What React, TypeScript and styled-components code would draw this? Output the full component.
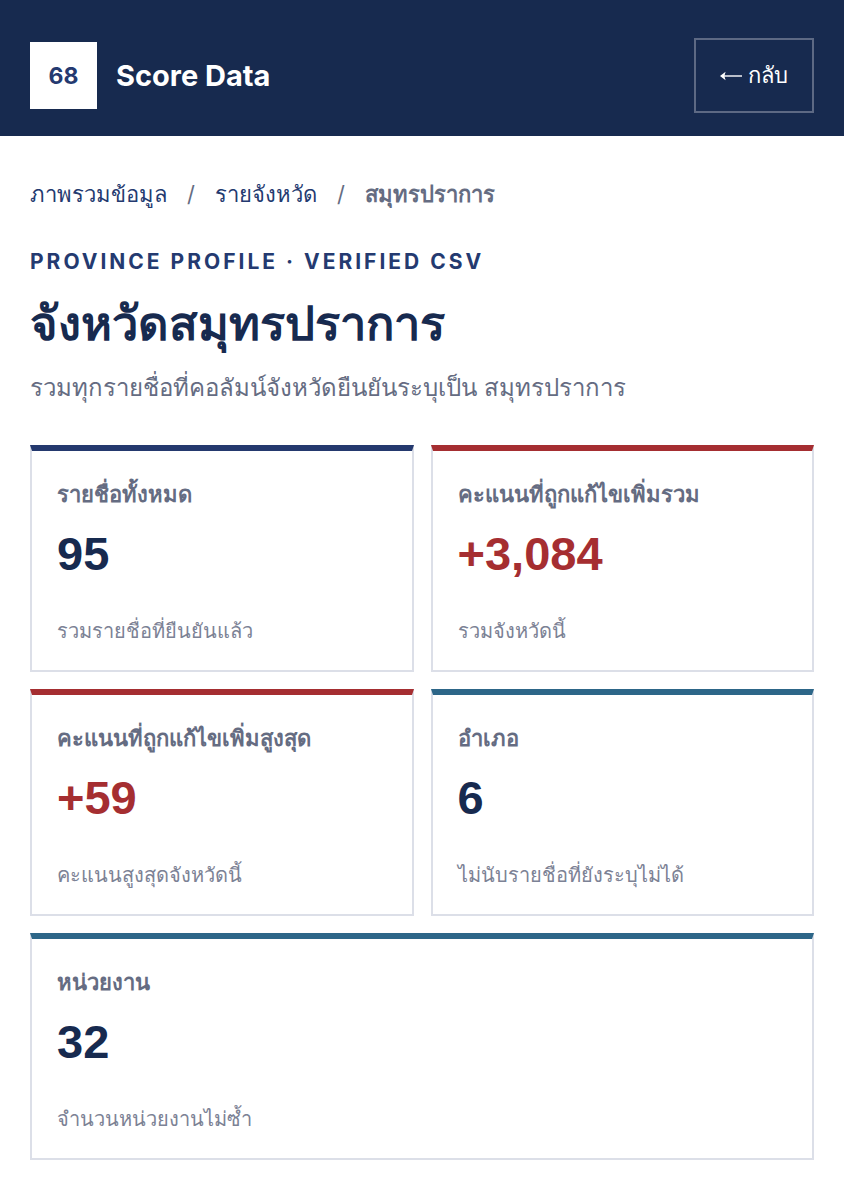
import React from 'react';
import styled, { createGlobalStyle } from 'styled-components';

const Global = createGlobalStyle`
  * { box-sizing: border-box; }
  body { margin: 0; background: #fff; color: #172a4f; font-family: "Inter", "Noto Sans", sans-serif; }
  h1, h2, p { margin: 0; }
`;

const Header = styled.header`
  display: flex;
  align-items: center;
  justify-content: space-between;
  padding: 38px 30px 23px;
  background: #172a4f;
  color: #fff;
`;

const Brand = styled.a`
  display: flex;
  align-items: center;
  gap: 19px;
  color: #fff;
  text-decoration: none;
  font-size: 29px;
  line-height: 36px;
  font-weight: 700;
`;

const Mark = styled.span`
  display: grid;
  place-items: center;
  width: 67px;
  height: 67px;
  background: #fff;
  color: #243a70;
  font-size: 23px;
`;

const BackButton = styled.button`
  display: flex;
  align-items: center;
  gap: 6px;
  height: 75px;
  padding: 0 24px;
  border: 2px solid #5d6984;
  background: transparent;
  color: #fff;
  font: inherit;
  font-size: 22px;
`;

const Main = styled.main`
  padding: 40px 30px;
`;

const Crumbs = styled.nav`
  display: flex;
  align-items: center;
  flex-wrap: wrap;
  column-gap: 20px;
  font-size: 22px;
  line-height: 36px;
  color: #656c82;
`;

const CrumbLink = styled.a`
  color: #243a70;
  text-decoration: none;
`;

const Current = styled.span`
  font-weight: 600;
`;

const Eyebrow = styled.p`
  margin-top: 34px;
  color: #243a70;
  font-size: 21px;
  line-height: 32px;
  font-weight: 700;
  letter-spacing: 3px;
`;

const Title = styled.h1`
  margin-top: 7px;
  font-size: 47px;
  line-height: 76px;
  font-weight: 600;
`;

const Lead = styled.p`
  margin-top: 7px;
  color: #656c82;
  font-size: 24px;
  line-height: 40px;
`;

const Stats = styled.section`
  display: grid;
  grid-template-columns: 1fr 1fr;
  gap: 17px;
  margin-top: 37px;
`;

const Card = styled.article<{ $accent: string; $wide?: boolean }>`
  grid-column: ${p => (p.$wide ? '1 / -1' : 'auto')};
  padding: 26px 25px 22px;
  border: 2px solid #dcdfe8;
  border-top: 6px solid ${p => p.$accent};
`;

const Label = styled.h2`
  color: #656c82;
  font-size: 22px;
  line-height: 34px;
  font-weight: 600;
`;

const Value = styled.p<{ $color: string }>`
  margin-top: 14px;
  color: ${p => p.$color};
  font-family: "Liberation Sans", sans-serif;
  font-size: 47px;
  line-height: 58px;
  font-weight: 700;
`;

const Note = styled.p`
  margin-top: 31px;
  color: #7c8295;
  font-size: 20px;
  line-height: 34px;
`;

const navy = '#172a4f';
const red = '#a52e31';
const teal = '#2d6688';

const stats = [
  { label: 'รายชื่อทั้งหมด', value: '95', note: 'รวมรายชื่อที่ยืนยันแล้ว', accent: '#24396e', color: navy },
  { label: 'คะแนนที่ถูกแก้ไขเพิ่มรวม', value: '+3,084', note: 'รวมจังหวัดนี้', accent: red, color: red },
  { label: 'คะแนนที่ถูกแก้ไขเพิ่มสูงสุด', value: '+59', note: 'คะแนนสูงสุดจังหวัดนี้', accent: red, color: red },
  { label: 'อำเภอ', value: '6', note: 'ไม่นับรายชื่อที่ยังระบุไม่ได้', accent: teal, color: navy },
  { label: 'หน่วยงาน', value: '32', note: 'จำนวนหน่วยงานไม่ซ้ำ', accent: teal, color: navy, wide: true },
];

function ArrowLeft() {
  return (
    <svg width="22" height="10" viewBox="0 0 22 10" aria-hidden="true">
      <path d="M3 5H22" stroke="currentColor" strokeWidth="1.4" fill="none" />
      <path d="M0 5L5.6 .8L4.4 5L5.6 9.2Z" fill="currentColor" />
    </svg>
  );
}

export default function App() {
  return (
    <>
      <Global />
      <Header>
        <Brand href="#"><Mark>68</Mark>Score Data</Brand>
        <BackButton type="button"><ArrowLeft />กลับ</BackButton>
      </Header>
      <Main>
        <Crumbs aria-label="breadcrumb">
          <CrumbLink href="#">ภาพรวมข้อมูล</CrumbLink>
          <span>/</span>
          <CrumbLink href="#">รายจังหวัด</CrumbLink>
          <span>/</span>
          <Current aria-current="page">สมุทรปราการ</Current>
        </Crumbs>
        <Eyebrow>PROVINCE PROFILE · VERIFIED CSV</Eyebrow>
        <Title>จังหวัดสมุทรปราการ</Title>
        <Lead>รวมทุกรายชื่อที่คอลัมน์จังหวัดยืนยันระบุเป็น สมุทรปราการ</Lead>
        <Stats>
          {stats.map(s => (
            <Card key={s.label} $accent={s.accent} $wide={s.wide}>
              <Label>{s.label}</Label>
              <Value $color={s.color}>{s.value}</Value>
              <Note>{s.note}</Note>
            </Card>
          ))}
        </Stats>
      </Main>
    </>
  );
}
